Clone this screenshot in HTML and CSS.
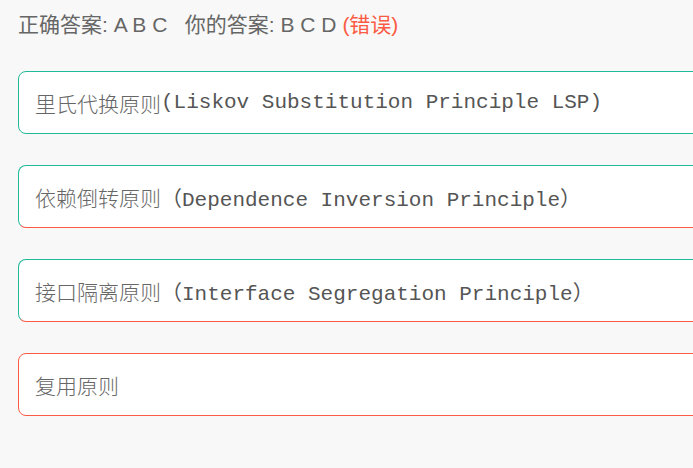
FILE: index.html
```html
<!DOCTYPE html>
<html lang="zh">
<head>
<meta charset="utf-8">
<link rel="stylesheet" href="styles.css">
</head>
<body>
<div class="page">
  <div class="result">正确答案: A B C &nbsp; 你的答案: B C D <span class="wrong">(错误)</span></div>
  <div class="options">
    <div class="option ok">里氏代换原则<span class="en">(Liskov Substitution Principle LSP)</span></div>
    <div class="option mixed">依赖倒转原则<span class="en">（Dependence Inversion Principle）</span></div>
    <div class="option mixed">接口隔离原则<span class="en">（Interface Segregation Principle）</span></div>
    <div class="option bad">复用原则</div>
  </div>
</div>
</body>
</html>
```
FILE: styles.css
```css
html, body {
  margin: 0;
  padding: 0;
  background: #f8f8f8;
  overflow: hidden;
}
.page {
  padding: 10px 0 0 18px;
  font-family: "Liberation Sans", "Noto Sans CJK SC", sans-serif;
}
.result {
  font-size: 21px;
  line-height: 30px;
  color: #666;
  white-space: pre;
}
.wrong {
  color: #fb5b44;
}
.options {
  margin-top: 31px;
  display: flex;
  flex-direction: column;
  gap: 31px;
}
.option {
  box-sizing: border-box;
  width: 720px;
  height: 63px;
  background: #fff;
  border: 1px solid #1fba98;
  border-radius: 8px;
  padding: 0 16px;
  display: flex;
  align-items: center;
  font-family: "Noto Sans CJK SC", sans-serif;
  font-size: 21px;
  font-weight: 300;
  color: #666;
  white-space: nowrap;
}
.en {
  font-family: "Liberation Mono", "Noto Sans CJK SC", monospace;
  font-size: 21px;
  font-weight: 400;
  color: #555;
}
.mixed {
  border-bottom-color: #fb5b44;
}
.bad {
  border-color: #fb5b44;
}
```
